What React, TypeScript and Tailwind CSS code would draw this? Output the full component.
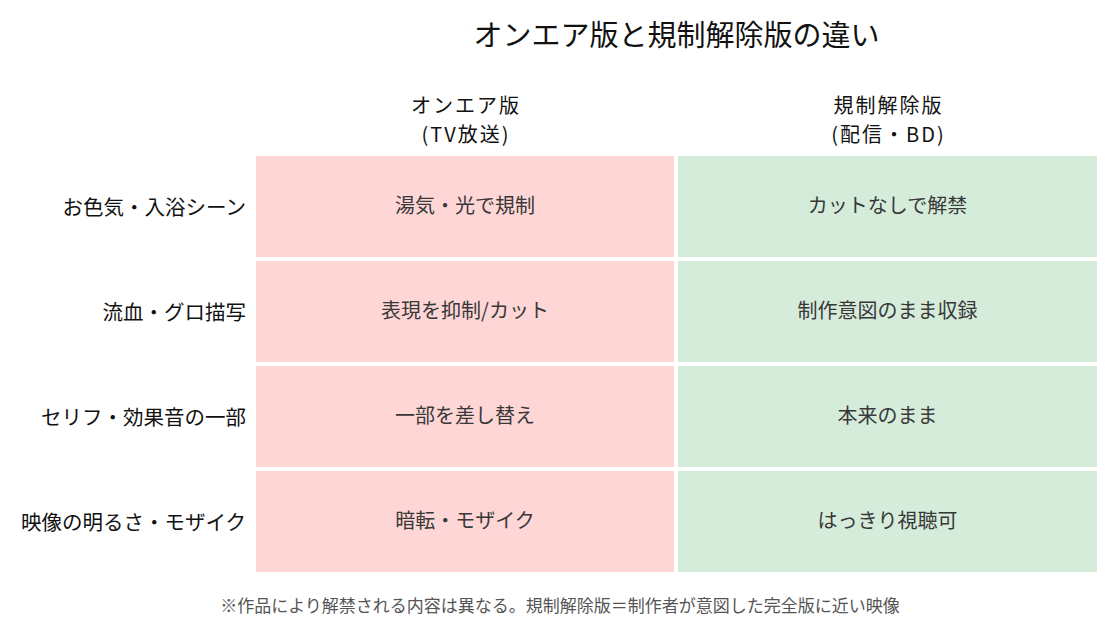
const rows = [
  { label: "お色気・入浴シーン", onair: "湯気・光で規制", uncut: "カットなしで解禁" },
  { label: "流血・グロ描写", onair: "表現を抑制/カット", uncut: "制作意図のまま収録" },
  { label: "セリフ・効果音の一部", onair: "一部を差し替え", uncut: "本来のまま" },
  { label: "映像の明るさ・モザイク", onair: "暗転・モザイク", uncut: "はっきり視聴可" },
];

export default function App() {
  return (
    <div
      className="w-[1118px] h-[624px] bg-white text-[#111]"
      style={{ fontFamily: '"Noto Sans CJK JP", "Noto Sans", sans-serif' }}
    >
      <div className="grid grid-cols-[252px_418px_419px] gap-x-[4px]">
        <div />
        <h1 className="col-span-2 pt-[13px] text-center text-[29px] leading-[40px] font-normal">
          オンエア版と規制解除版の違い
        </h1>

        <div />
        <div className="mt-[37px] pl-[2px] text-center text-[20px] leading-[29px] tracking-[2px] text-[#111]">
          <div>オンエア版</div>
          <div>(TV放送)</div>
        </div>
        <div className="mt-[37px] pl-[2px] text-center text-[20px] leading-[29px] tracking-[2px] text-[#111]">
          <div>規制解除版</div>
          <div>(配信・BD)</div>
        </div>
      </div>

      <div className="mt-[8px] grid grid-cols-[252px_418px_419px] auto-rows-[101px] gap-x-[4px] gap-y-[4px]">
        {rows.map((r) => (
          <div key={r.label} className="contents">
            <div className="flex items-center justify-end pr-[6px] pb-[1px] text-[20.5px]">
              {r.label}
            </div>
            <div className="flex items-center justify-center pb-[4px] bg-[#fed6d6] text-[20px] text-[#383838]">
              {r.onair}
            </div>
            <div className="flex items-center justify-center pb-[4px] bg-[#d5ecdb] text-[20px] text-[#383838]">
              {r.uncut}
            </div>
          </div>
        ))}
      </div>

      <p className="mt-[21px] text-center pl-[2px] text-[17px] leading-[24px] text-[#555]">
        ※作品により解禁される内容は異なる。規制解除版＝制作者が意図した完全版に近い映像
      </p>
    </div>
  );
}
